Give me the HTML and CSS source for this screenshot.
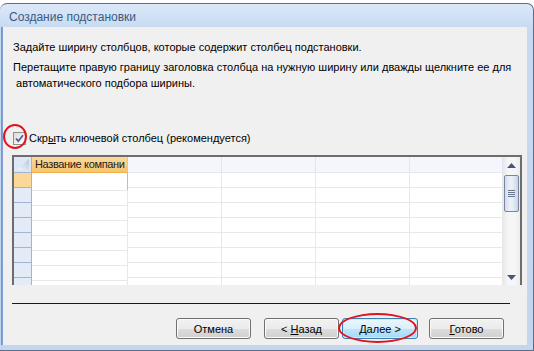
FILE: index.html
```html
<!DOCTYPE html>
<html lang="ru">
<head>
    <meta charset="UTF-8">
    <meta name="viewport" content="width=device-width, initial-scale=1.0">
    <title>Создание подстановки</title>
    <link rel="stylesheet" href="styles.css">
</head>
<body>
    <div class="window">
        <div class="titlebar">Создание подстановки</div>

        <div class="client">
            <p class="intro">Задайте ширину столбцов, которые содержит столбец подстановки.</p>
            <p class="hint">Перетащите правую границу заголовка столбца на нужную ширину или дважды щелкните ее для<br>&nbsp;автоматического подбора ширины.</p>

            <label class="check">
                <span class="box">
                    <svg width="11" height="11" viewBox="0 0 11 11"><path d="M2 5.5 L4.3 8.2 L9 2.2" fill="none" stroke="#4b5f96" stroke-width="1.8"/></svg>
                </span>
                <span>Скр<u>ы</u>ть ключевой столбец (рекомендуется)</span>
            </label>

            <div class="sheet">
                <div class="col selector">
                    <div class="head corner">
                        <svg width="17" height="15" viewBox="0 0 17 15">
                            <defs>
                                <linearGradient id="tri" x1="0" y1="1" x2="1" y2="0">
                                    <stop offset="0" stop-color="#f4f7fb"/>
                                    <stop offset="1" stop-color="#b4c5de"/>
                                </linearGradient>
                            </defs>
                            <polygon points="3,13 15,13 15,2" fill="url(#tri)"/>
                        </svg>
                    </div>
                    <div class="body"><div class="current"></div></div>
                </div>
                <div class="col field">
                    <div class="head">Название компани</div>
                    <div class="body"><div class="current"></div></div>
                </div>
                <div class="col"><div class="head"></div><div class="body"></div></div>
                <div class="col"><div class="head"></div><div class="body"></div></div>
                <div class="col"><div class="head"></div><div class="body"></div></div>
                <div class="col narrow"><div class="head"></div><div class="body"></div></div>
                <div class="scrollbar">
                    <div class="arrow">
                        <svg width="9" height="5" viewBox="0 0 9 5"><polygon points="0,5 4.5,0 9,5" fill="#42577c"/></svg>
                    </div>
                    <div class="thumb">
                        <svg width="7" height="7" viewBox="0 0 7 7"><path d="M0 .5h7M0 2.5h7M0 4.5h7M0 6.5h7" stroke="#66748e"/></svg>
                    </div>
                    <div class="track"></div>
                    <div class="arrow down">
                        <svg width="9" height="5" viewBox="0 0 9 5"><polygon points="0,0 9,0 4.5,5" fill="#42577c"/></svg>
                    </div>
                </div>
            </div>

            <div class="rule"></div>

            <div class="buttons">
                <button>Отмена</button>
                <button class="back">&lt; <u>Н</u>азад</button>
                <button class="next"><u>Д</u>алее &gt;</button>
                <button class="finish"><u>Г</u>отово</button>
            </div>
        </div>

        <div class="mark mark-check"></div>
        <div class="mark mark-next"></div>
    </div>
</body>
</html>
```

FILE: styles.css
```css
body {
    margin: 0;
    background-color: #ffffff;
    font-family: "Liberation Sans", Arial, sans-serif;
    font-size: 11px;
    color: #000000;
}

.window {
    position: relative;
    margin-top: 3px;
    height: 348px;
    box-sizing: border-box;
    display: flex;
    flex-direction: column;
    padding: 0 6px 5px 3px;
    background: linear-gradient(#dce8f8, #c7daf1 24px, #c3d6ee);
    border-top: 1px solid #5a6d8b;
    border-right: 1px solid #5a6d8b;
    border-bottom: 1px solid #5a6d8b;
    border-radius: 7px 7px 0 0;
}

.titlebar {
    height: 23px;
    box-sizing: border-box;
    padding: 5px 0 0 6px;
    line-height: 16px;
    font-size: 12px;
    color: #3a5a82;
}

.client {
    flex: 1;
    display: flex;
    flex-direction: column;
    background-color: #f0f0f0;
    box-shadow: -1px 0 0 #7fa3d6, -2px 0 0 #6f97d0;
}

.intro,
.hint {
    margin: 0;
    padding-left: 10px;
    line-height: 16px;
}

.intro {
    margin-top: 12px;
}

.hint {
    margin-top: 4px;
}

/* флажок */
.check {
    display: flex;
    align-items: center;
    height: 16px;
    margin: 39px 0 0 10px;
}

.check .box {
    width: 13px;
    height: 13px;
    box-sizing: border-box;
    margin-right: 3px;
    display: flex;
    align-items: center;
    justify-content: center;
    border: 1px solid #8e8f8f;
    background: linear-gradient(135deg, #dcdcdc, #ffffff);
}

/* таблица */
.sheet {
    display: flex;
    width: 510px;
    height: 130px;
    box-sizing: border-box;
    margin: 9px 0 0 9px;
    border: 2px solid #6d6d6d;
    border-bottom: none;
    background-color: #ffffff;
}

.col {
    display: flex;
    flex-direction: column;
    width: 94px;
}

.col .head {
    height: 16px;
    box-sizing: border-box;
    background-color: #f5f6fd;
    border-right: 1px solid #e2e5ef;
    border-bottom: 1px solid #e4e7f0;
}

.col .body {
    flex: 1;
    border-right: 1px solid #e8e8e8;
    background: repeating-linear-gradient(#ffffff 0 14px, #e8e8e8 14px 15px);
}

.col.narrow {
    width: 93px;
}

.selector {
    width: 18px;
}

.selector .head {
    background-color: #dde7f5;
    border-right-color: #9fb5d3;
    border-bottom-color: #9fb5d3;
}

.selector .body {
    border-right-color: #9fb5d3;
    background: repeating-linear-gradient(#e3ebf7 0 14px, #9fb5d3 14px 15px);
}

.selector .current {
    height: 14px;
    background-color: #fcd898;
}

.field {
    width: 96px;
}

.field .head {
    padding-left: 3px;
    line-height: 15px;
    letter-spacing: -0.35px;
    white-space: nowrap;
    color: #1c1c1c;
    background: linear-gradient(#fbd99c, #f7c46d);
    border-right-color: #f3c478;
    border-bottom-color: #f1b04f;
}

.field .body {
    background-position: 0 3px;
}

.field .current {
    height: 17px;
    background-color: #ffffff;
    box-shadow: 1px 0 0 #f6b455;
}

.scrollbar {
    display: flex;
    flex-direction: column;
    width: 17px;
    background: linear-gradient(to right, #e8e8e8, #f6f6f6 30%, #f6f6f6 70%, #ececec);
}

.arrow {
    height: 17px;
    display: flex;
    align-items: center;
    justify-content: center;
}

.arrow.down {
    height: 15px;
}

.thumb {
    height: 37px;
    box-sizing: border-box;
    margin: 1px 1px 0 1px;
    display: flex;
    align-items: center;
    justify-content: center;
    border: 1px solid #7886a1;
    border-radius: 2px;
    background: linear-gradient(to right, #d3dcec, #eef2f8 40%, #e7edf6 60%, #c9d4e6);
}

.track {
    flex: 1;
}

.rule {
    width: 498px;
    height: 1px;
    margin: 18px 0 0 9px;
    background-color: #1a1a1a;
}

/* кнопки */
.buttons {
    display: flex;
    justify-content: flex-end;
    margin-top: 14px;
    padding-right: 23px;
}

.buttons button {
    width: 75px;
    height: 21px;
    padding: 0;
    font: inherit;
    color: #000000;
    border: 1px solid #707070;
    border-radius: 3px;
    background: linear-gradient(#f2f2f2, #ebebeb 50%, #dddddd 50%, #cfcfcf);
    box-shadow: inset 0 0 0 1px #fbfbfb;
}

.buttons .back {
    margin-left: 13px;
}

.buttons .next {
    width: 76px;
    margin-left: 3px;
    border-color: #3c7fb1;
    background: linear-gradient(#eaf6fd, #d9f0fc 50%, #bee6fd 50%, #a7d9f5);
    box-shadow: inset 0 0 0 1px #c9ecfd;
}

.buttons .finish {
    margin-left: 11px;
}

/* красные пометки поверх окна */
.mark {
    position: absolute;
    box-sizing: border-box;
    border: 2px solid #e3121b;
    border-radius: 50%;
}

.mark-check {
    left: 3px;
    top: 120px;
    width: 24px;
    height: 25px;
}

.mark-next {
    left: 338px;
    top: 309px;
    width: 79px;
    height: 30px;
}
```
